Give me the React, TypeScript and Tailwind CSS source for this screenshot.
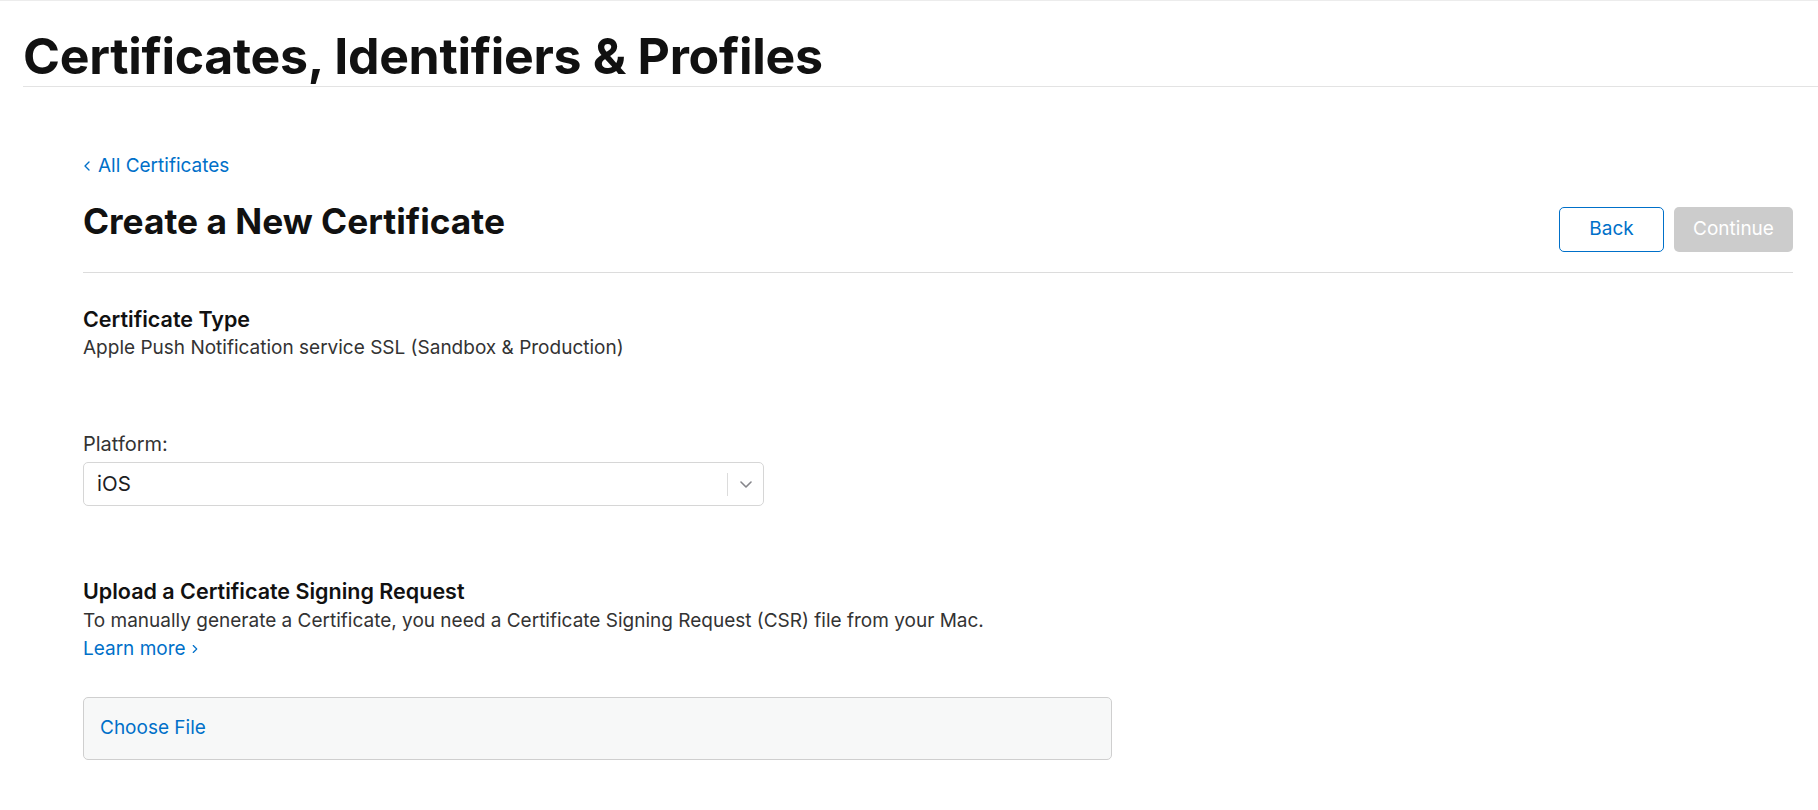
import { ChevronLeft, ChevronRight } from "lucide-react";

export default function App() {
  return (
    <div className="min-h-screen bg-white border-t border-[#ececec] font-['Inter','Liberation_Sans',sans-serif] text-[#1d1d1f]">
      <header className="ml-[23px] border-b border-[#e3e3e3] pt-[30px] pb-[5px]">
        <h1 className="text-[50px] leading-[50px] font-bold tracking-[-0.3px] text-[#111111]">
          Certificates, Identifiers &amp; Profiles
        </h1>
      </header>

      <main className="pl-[83px] pr-[25px]">
        <a href="#" className="mt-[67px] flex items-center gap-[3px] text-[19px] leading-[24px] text-[#0070c9]">
          <ChevronLeft className="h-[16px] w-[16px] -ml-[4px]" strokeWidth={2} />
          All Certificates
        </a>

        <div className="mt-[24px] flex items-start justify-between border-b border-[#dcdcdc] pb-[20px]">
          <h2 className="text-[35.3px] leading-[40px] font-bold text-[#111111]">Create a New Certificate</h2>
          <div className="mt-[5px] flex gap-[10px]">
            <button className="h-[45px] w-[105px] rounded-[5px] border border-[#0070c9] text-[19px] text-[#0070c9]">
              Back
            </button>
            <button className="h-[45px] w-[119px] rounded-[5px] bg-[#cccccc] text-[19px] text-white" disabled>
              Continue
            </button>
          </div>
        </div>

        <section className="mt-[32px]">
          <h3 className="text-[21.5px] leading-[28px] font-semibold text-[#111111]">Certificate Type</h3>
          <p className="mt-[1px] text-[19px] leading-[28px] text-[#333333]">
            Apple Push Notification service SSL (Sandbox &amp; Production)
          </p>
        </section>

        <section className="mt-[68px]">
          <label className="block text-[20px] leading-[28px] text-[#333333]">Platform:</label>
          <div className="mt-[4px] flex h-[44px] w-[681px] items-center rounded-[5px] border border-[#d6d6d6] bg-white">
            <span className="flex-1 pl-[13px] text-[20.5px] text-[#1d1d1f]">iOS</span>
            <span className="h-[23px] w-px bg-[#dcdcdc]" />
            <span className="flex w-[35px] items-center justify-center">
              <svg width="12" height="7" viewBox="0 0 12 7" fill="none">
                <path d="M1 1l5 5 5-5" stroke="#86868b" strokeWidth="1.6" strokeLinecap="round" strokeLinejoin="round" />
              </svg>
            </span>
          </div>
        </section>

        <section className="mt-[71px]">
          <h3 className="text-[21.5px] leading-[28px] font-semibold text-[#111111]">
            Upload a Certificate Signing Request
          </h3>
          <p className="mt-[2px] text-[19px] leading-[28px] text-[#333333]">
            To manually generate a Certificate, you need a Certificate Signing Request (CSR) file from your Mac.
          </p>
          <a href="#" className="flex items-center gap-[2px] text-[19px] leading-[28px] text-[#0070c9]">
            Learn more
            <ChevronRight className="h-[14px] w-[14px]" strokeWidth={2} />
          </a>
          <div className="mt-[34px] flex h-[63px] w-[1029px] items-center rounded-[5px] border border-[#cfcfcf] bg-[#f7f8f8] pl-[16px]">
            <span className="text-[19px] text-[#0070c9]">Choose File</span>
          </div>
        </section>
      </main>
    </div>
  );
}
